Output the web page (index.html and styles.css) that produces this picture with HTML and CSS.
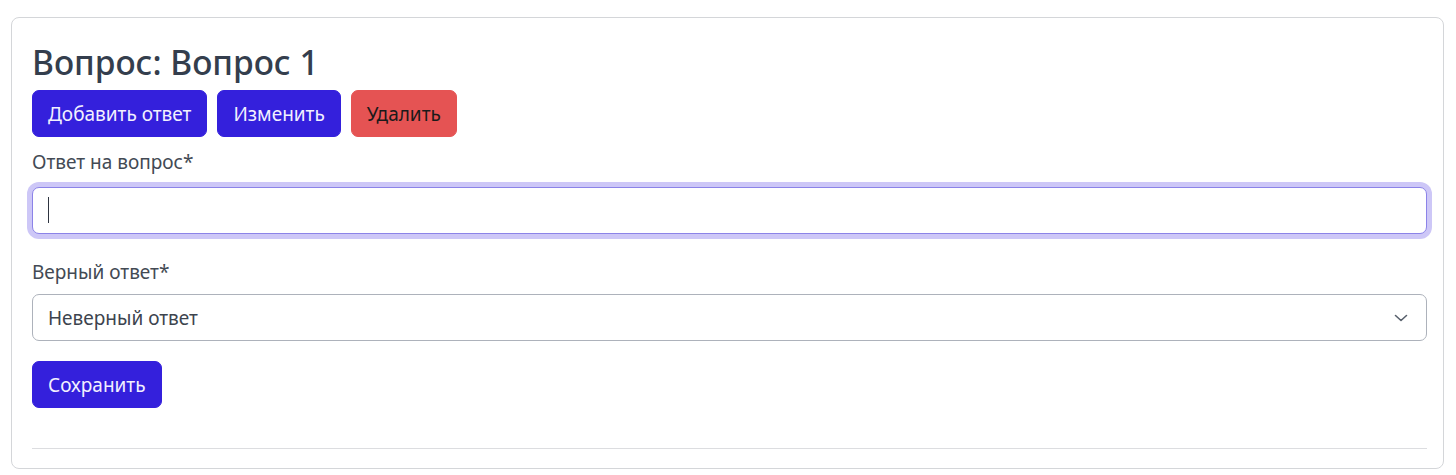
FILE: index.html
```html
<!DOCTYPE html>
<html lang="ru">
<head>
<meta charset="utf-8">
<title>Вопрос</title>
<link rel="stylesheet" href="styles.css">
</head>
<body>
<div class="page">
  <div class="card">
    <h2 class="title">Вопрос: Вопрос 1</h2>
    <div class="actions">
      <button class="btn btn-primary">Добавить ответ</button>
      <button class="btn btn-primary">Изменить</button>
      <button class="btn btn-danger">Удалить</button>
    </div>
    <form class="form">
      <label class="form-label" for="answer">Ответ на вопрос*</label>
      <div class="input-wrap"><input class="form-control focus" id="answer" type="text"><span class="caret"></span></div>
      <label class="form-label second" for="correct">Верный ответ*</label>
      <div class="select">
        <span>Неверный ответ</span>
        <svg class="chevron" width="14" height="8" viewBox="0 0 14 8"><path d="M1.5 1.5 L7 6.5 L12.5 1.5" fill="none" stroke="#58606c" stroke-width="1.6" stroke-linecap="round" stroke-linejoin="round"/></svg>
      </div>
      <div class="save-row"><button type="button" class="btn btn-primary">Сохранить</button></div>
    </form>
    <hr class="divider">
  </div>
</div>
</body>
</html>
```
FILE: styles.css
```css
* { box-sizing: border-box; }
html, body { margin: 0; padding: 0; background: #fff; }
body {
  font-family: "Noto Sans", "Open Sans", sans-serif;
  font-size: 20px;
  color: #414852;
}
.page {
  padding: 17px 12px 0 11px;
}
.card {
  border: 1px solid #d4d6d9;
  border-radius: 8px;
  padding: 20px 16px 20px 20px;
  height: 452px;
}
.title {
  margin: 0 0 4px 0;
  font-size: 33.5px;
  line-height: 48px;
  font-weight: 500;
  color: #343e4d;
}
.actions {
  display: flex;
  gap: 10px;
}
.btn {
  font-family: inherit;
  font-size: 19px;
  line-height: 30px;
  height: 47px;
  padding: 7px 15px;
  border: 1px solid transparent;
  border-radius: 7px;
  cursor: pointer;
}
.btn-primary {
  background: #3420dc;
  border-color: #3420dc;
  color: #f2f0ff;
}
.btn-danger {
  background: #e55353;
  border-color: #e55353;
  color: #1a1a1a;
}
.form {
  display: flex;
  flex-direction: column;
  margin-top: 10px;
}
.form-label {
  font-size: 19px;
  line-height: 30px;
  margin-bottom: 10px;
  color: #434a54;
}
.form-label.second {
  margin-top: 23px;
  margin-bottom: 7px;
}
.input-wrap {
  position: relative;
}
.form-control {
  display: block;
  width: 100%;
  height: 47px;
  font-family: inherit;
  font-size: 20px;
  padding: 7px 15px;
  border-radius: 7px;
  border: 1px solid #8c83e8;
  outline: none;
  background: #fff;
}
.form-control.focus {
  box-shadow: 0 0 0 5px #cdc7f7;
}
.caret {
  position: absolute;
  left: 16px;
  top: 10px;
  width: 1px;
  height: 26px;
  background: #2e3440;
}
.select {
  display: flex;
  align-items: center;
  justify-content: space-between;
  height: 47px;
  padding: 0 15px 0 15px;
  border: 1px solid #adb2bb;
  border-radius: 7px;
  font-size: 19px;
  color: #3d444e;
}
.chevron {
  margin-right: 3px;
}
.save-row {
  display: flex;
  margin-top: 20px;
}
.divider {
  margin: 40px 0 0 0;
  border: 0;
  border-top: 1px solid #dcdde0;
}
```
